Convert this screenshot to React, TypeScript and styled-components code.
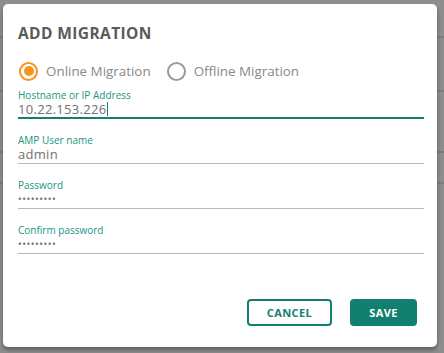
import styled, { createGlobalStyle } from "styled-components";

const GlobalStyle = createGlobalStyle`
  html, body {
    margin: 0;
    padding: 0;
    width: 444px;
    height: 353px;
    overflow: hidden;
    font-family: "Open Sans", "Noto Sans", sans-serif;
  }
`;

const Backdrop = styled.div`
  width: 444px;
  height: 353px;
  background-color: #8e8e8e;
  padding: 4px 7px 6px 3px;
  box-sizing: border-box;
  display: flex;
  position: relative;
`;

const BgRows = styled.div`
  position: absolute;
  inset: 0;
  display: flex;
  flex-direction: column;
  padding-top: 36px;
`;

const BgRow = styled.div<{ h: number }>`
  height: ${(p) => p.h}px;
  border-bottom: 2px solid #7d7d7d;
  flex-shrink: 0;
`;

const Dialog = styled.div`
  position: relative;
  flex: 1;
  background: #fff;
  border-radius: 5px;
  box-shadow: 0 3px 4px rgba(0, 0, 0, 0.35);
  padding: 19px 13px 21px 15px;
  display: flex;
  flex-direction: column;
`;

const Title = styled.h2`
  margin: 0;
  font-size: 15.5px;
  font-weight: 700;
  color: #5a5a5a;
  letter-spacing: 0.4px;
  line-height: 20px;
`;

const RadioRow = styled.div`
  display: flex;
  align-items: center;
  margin-top: 17px;
  height: 22px;
`;

const RadioOption = styled.label`
  display: flex;
  align-items: center;
  gap: 8px;
  font-size: 13.4px;
  color: #8a8a8a;
  margin-right: 15px;
`;

const RadioCircle = styled.span<{ $checked?: boolean }>`
  width: 19px;
  height: 19px;
  margin-left: 1px;
  box-sizing: border-box;
  border-radius: 50%;
  border: 2px solid ${(p) => (p.$checked ? "#f7931e" : "#9a9a9a")};
  display: flex;
  align-items: center;
  justify-content: center;
  &::after {
    content: "";
    width: 10px;
    height: 10px;
    border-radius: 50%;
    background: ${(p) => (p.$checked ? "#f7931e" : "transparent")};
  }
`;

const Fields = styled.div`
  display: flex;
  flex-direction: column;
  gap: 15px;
  margin-top: 7px;
`;

const Field = styled.div<{ $active?: boolean }>`
  display: flex;
  flex-direction: column;
  border-bottom: ${(p) => (p.$active ? "2px solid #12806f" : "1px solid #b8b8b8")};
  padding-bottom: ${(p) => (p.$active ? "0" : "1px")};
`;

const Label = styled.span`
  font-size: 10px;
  line-height: 12px;
  color: #1b9583;
`;

const Value = styled.span<{ $dots?: boolean }>`
  font-size: ${(p) => (p.$dots ? "10px" : "13px")};
  line-height: 16px;
  height: 16px;
  color: #707070;
  letter-spacing: ${(p) => (p.$dots ? "0.5px" : "0.3px")};
  display: flex;
  align-items: center;
`;

const Caret = styled.span`
  display: inline-block;
  width: 1px;
  height: 14px;
  background: #12806f;
  margin-left: 1px;
`;

const Actions = styled.div`
  margin-top: auto;
  display: flex;
  justify-content: flex-end;
  gap: 18px;
  padding-right: 7px;
`;

const Button = styled.button<{ $primary?: boolean }>`
  height: 27px;
  border-radius: 4px;
  font-family: "Open Sans", sans-serif;
  font-weight: 700;
  font-size: 11px;
  letter-spacing: 0.4px;
  padding: 0;
  width: ${(p) => (p.$primary ? "67px" : "85px")};
  border: 2px solid #12806f;
  background: ${(p) => (p.$primary ? "#12806f" : "#fff")};
  color: ${(p) => (p.$primary ? "#fff" : "#12806f")};
`;

export default function App() {
  return (
    <>
      <GlobalStyle />
      <Backdrop>
        <BgRows>
          <BgRow h={0} />
          <BgRow h={52} />
          <BgRow h={59} />
          <BgRow h={29} />
        </BgRows>
        <Dialog>
          <Title>ADD MIGRATION</Title>
          <RadioRow>
            <RadioOption>
              <RadioCircle $checked />
              Online Migration
            </RadioOption>
            <RadioOption>
              <RadioCircle />
              Offline Migration
            </RadioOption>
          </RadioRow>
          <Fields>
            <Field $active>
              <Label>Hostname or IP Address</Label>
              <Value>
                10.22.153.226
                <Caret />
              </Value>
            </Field>
            <Field>
              <Label>AMP User name</Label>
              <Value>admin</Value>
            </Field>
            <Field>
              <Label>Password</Label>
              <Value $dots>•••••••••</Value>
            </Field>
            <Field>
              <Label>Confirm password</Label>
              <Value $dots>•••••••••</Value>
            </Field>
          </Fields>
          <Actions>
            <Button>CANCEL</Button>
            <Button $primary>SAVE</Button>
          </Actions>
        </Dialog>
      </Backdrop>
    </>
  );
}
